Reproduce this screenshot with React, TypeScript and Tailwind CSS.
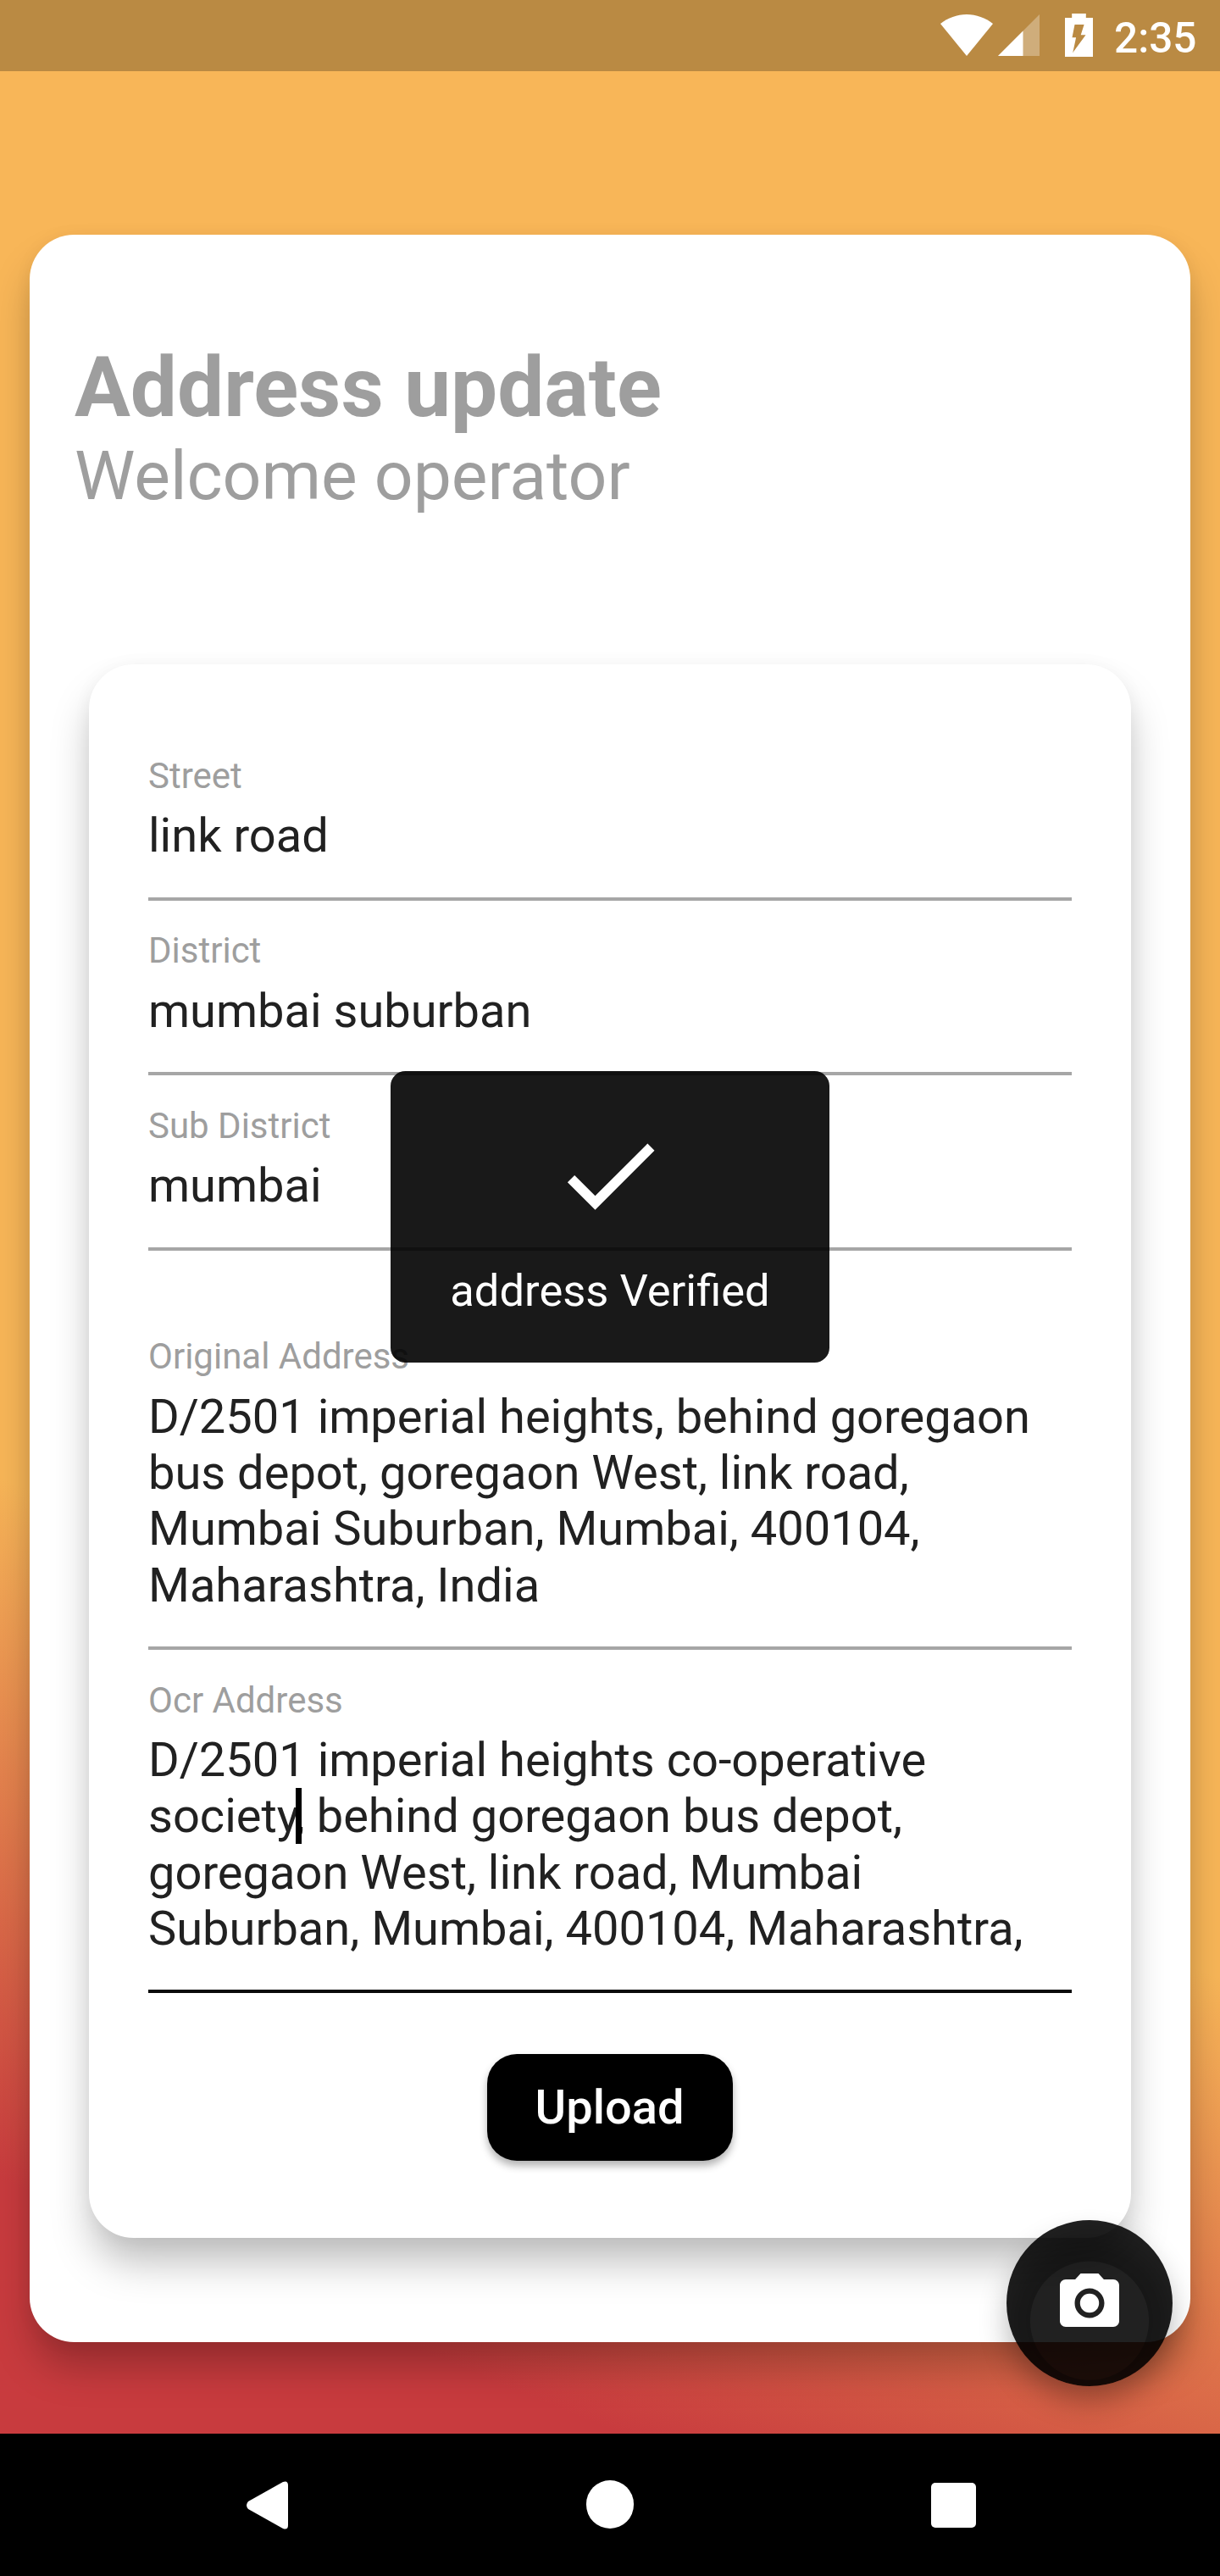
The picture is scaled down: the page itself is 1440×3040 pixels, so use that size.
import type { ReactNode } from "react";

function StatusBar() {
  return (
    <header className="flex h-[84px] shrink-0 items-start bg-[#ba8a43] pl-[1110px]">
      <svg className="mt-[17px] h-[50px] w-[62px] shrink-0" viewBox="0 0 62 50" fill="#fff">
        <path d="M31 49 0 11C9 4 19.500 0 31 0s22 4 31 11z" />
      </svg>
      <svg className="mt-[17px] ml-[6px] h-[49px] w-[49px] shrink-0" viewBox="0 0 49 49" fill="#fff">
        <path d="M0 49 49 0v49z" opacity=".3" />
        <path d="M0 49 29.500 19.500V49z" />
      </svg>
      <svg className="mt-[16px] ml-[30px] h-[51px] w-[33px] shrink-0" viewBox="0 0 33 51" fill="#fff">
        <path
          fillRule="evenodd"
          d="M8.200 0h16.600v5H33v46H0V5h8.200zM11.500 13 8.500 28.300h4.600L9.300 46 24.500 25.200H18.700L22.600 13z"
        />
      </svg>
      <span className="mt-[15px] ml-[25px] text-[49.5px] leading-[60px] font-medium text-white">2:35</span>
    </header>
  );
}

type FieldProps = { label: string; lines: ReactNode[]; active?: boolean };

function Field({ label, lines, active = false }: FieldProps) {
  return (
    <div className="flex flex-col pt-[34.5px]">
      <label className="text-[42px] leading-[49px] text-[#9e9e9e]">{label}</label>
      <div className="mt-[13.5px] text-[56px] leading-[66.3px] whitespace-nowrap text-[#212121]">
        {lines.map((line, i) => (
          <div key={i}>{line}</div>
        ))}
      </div>
      <div className={active ? "mt-[39.2px] h-[4px] bg-[#0a0a0a]" : "mt-[39.2px] h-[4px] bg-[#a6a6a6]"} />
    </div>
  );
}

function Toast() {
  return (
    <div className="absolute top-[1264px] left-[461px] flex h-[343.5px] w-[518px] flex-col items-center rounded-[17.5px] bg-black/90 pt-[52.5px]">
      <svg className="size-[140px]" viewBox="0 0 24 24" fill="#fff">
        <path d="M9 16.170 4.830 12l-1.420 1.410L9 19 21 7l-1.410-1.410z" />
      </svg>
      <p className="mt-[35.5px] text-[52.5px] leading-[62px] whitespace-nowrap text-white">address Verified</p>
    </div>
  );
}

function CameraButton() {
  return (
    <button className="absolute top-[2620px] left-[1188px] flex size-[196px] items-center justify-center rounded-full bg-black/87 bg-[radial-gradient(circle_at_98px_118.7px,transparent_69.5px,rgba(0,0,0,0.3)_70.5px,rgba(0,0,0,0.26)_84px,rgba(0,0,0,0.04)_118px)] shadow-[0_20px_36px_-4px_rgba(0,0,0,0.32)]">
      <svg className="size-[84px]" viewBox="0 0 24 24" fill="#fff">
        <circle cx="12" cy="12" r="3.200" />
        <path d="M9 2 7.170 4H4c-1.100 0-2 .9-2 2v12c0 1.100.9 2 2 2h16c1.100 0 2-.9 2-2V6c0-1.100-.9-2-2-2h-3.170L15 2zm3 15c-2.760 0-5-2.240-5-5s2.240-5 5-5 5 2.240 5 5-2.240 5-5 5z" />
      </svg>
    </button>
  );
}

function NavBar() {
  return (
    <nav className="flex h-[168px] shrink-0 items-start bg-black">
      <svg className="mt-[56px] ml-[291px] h-[57px] w-[49px]" viewBox="0 0 49 57" fill="#fff">
        <path d="M2 24 43 1Q49-1 49 5V52Q49 58 43 56L2 33Q-2 28.500 2 24z" />
      </svg>
      <div className="mt-[55px] ml-[351.500px] size-[56.5px] rounded-full bg-white" />
      <div className="mt-[58px] ml-[351px] size-[53px] rounded-[5px] bg-white" />
    </nav>
  );
}

export default function App() {
  return (
    <div className="relative flex h-[3040px] w-[1440px] flex-col overflow-hidden bg-[linear-gradient(202.3deg,#f8b658_64.3%,#c83b3e_87.1%)] font-['Roboto',sans-serif]">
      <StatusBar />
      <main className="flex-1 px-[35px] pt-[192.5px]">
        <section className="h-[2487px] rounded-[52.5px] bg-white px-[70px] pt-[123.5px] shadow-[0_32px_48px_-4px_rgba(0,0,0,0.26),0_2px_22px_rgba(0,0,0,0.045)]">
          <div className="-ml-[17px] whitespace-nowrap text-[#9e9e9e]">
            <h1 className="text-[98px] leading-[115px] font-bold">Address update</h1>
            <h2 className="text-[80.5px] leading-[94px]">Welcome operator</h2>
          </div>
          <div className="mt-[175px] flex h-[1857px] flex-col rounded-[52.5px] bg-white px-[70px] pt-[72.3px] shadow-[0_32px_48px_-4px_rgba(0,0,0,0.26),0_2px_22px_rgba(0,0,0,0.045)]">
            <Field label="Street" lines={["link road"]} />
            <Field label="District" lines={["mumbai suburban"]} />
            <Field label="Sub District" lines={["mumbai"]} />
            <div className="h-[65.9px]" />
            <Field
              label="Original Address"
              lines={[
                "D/2501 imperial heights, behind goregaon",
                "bus depot, goregaon West, link road,",
                "Mumbai Suburban, Mumbai, 400104,",
                "Maharashtra, India",
              ]}
            />
            <Field
              label="Ocr Address"
              active
              lines={[
                "D/2501 imperial heights co-operative",
                <span className="relative">
                  society<span className="-ml-[4.5px]">, behind goregaon bus depot,</span>
                  <i className="absolute top-0 left-[174px] h-[66px] w-[7px] bg-black" />
                </span>,
                "goregaon West, link road, Mumbai",
                "Suburban, Mumbai, 400104, Maharashtra,",
              ]}
            />
            <button className="mt-[71.6px] flex h-[126px] w-[290.5px] items-center justify-center self-center rounded-[35px] bg-black text-[56px] font-medium text-white shadow-[0_6px_10px_rgba(0,0,0,0.3)]">
              <span className="-ml-[1px]">Upload</span>
            </button>
          </div>
        </section>
      </main>
      <NavBar />
      <Toast />
      <CameraButton />
    </div>
  );
}
